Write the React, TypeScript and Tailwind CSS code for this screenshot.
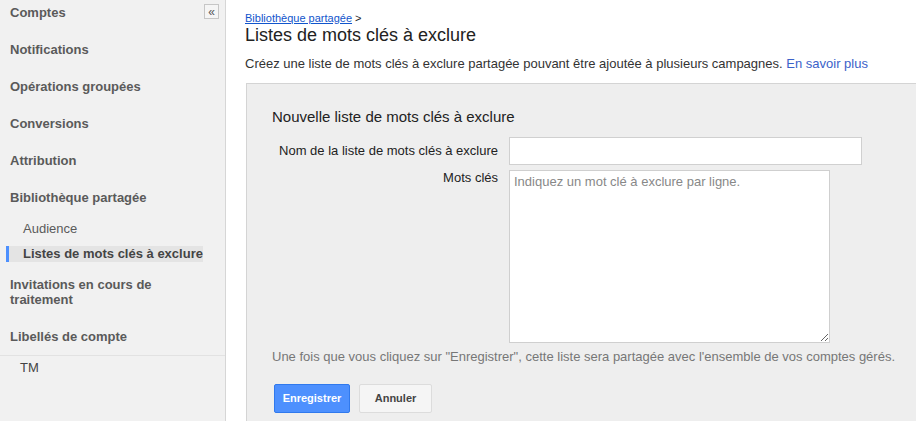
import React from "react";

const NAV_TOP = [
  "Comptes",
  "Notifications",
  "Opérations groupées",
  "Conversions",
  "Attribution",
  "Bibliothèque partagée",
];

function Sidebar() {
  return (
    <aside className="relative w-[226px] shrink-0 border-r border-[#d6d6d6] bg-[#f1f1f1] text-[13px] text-[#5a5a5a]">
      <button
        type="button"
        className="absolute left-[204px] top-[4px] flex h-[15px] w-[15px] items-center justify-center border border-[#c6c6c6] bg-[#f5f5f5] text-[12px] leading-none text-[#555]"
      >
        «
      </button>
      <div className="pt-[5px]">
        {NAV_TOP.map((label) => (
          <div key={label} className="flex h-[37px] items-start pl-[10px] font-bold">
            <span className="leading-[16px]">{label}</span>
          </div>
        ))}
      </div>
      <div className="-mt-[6px] pl-[23px] leading-[16px]">
        <div className="h-[25px]">Audience</div>
      </div>
      <div className="relative ml-[6px] h-[16px] w-[197px] bg-[#e4e4e4] pl-[17px] font-bold leading-[16px] text-[#444]">
        <span className="absolute left-0 top-0 h-full w-[3px] bg-[#4d90fe]" />
        Listes de mots clés à exclure
      </div>
      <div className="mt-[15px] pl-[10px] font-bold leading-[15px]">
        Invitations en cours de
        <br />
        traitement
      </div>
      <div className="mt-[22px] h-[26px] pl-[10px] font-bold leading-[16px]">Libellés de compte</div>
      <div className="border-t border-[#e2e2e2] pl-[20px] pt-[4px] leading-[16px] text-[#444]">TM</div>
    </aside>
  );
}

export default function App() {
  return (
    <div
      className="flex h-[421px] w-[916px] overflow-hidden bg-white"
      style={{ fontFamily: '"Liberation Sans", Arial, sans-serif' }}
    >
      <Sidebar />
      <main className="flex-1 pl-[19px] pt-[12px]">
        <div className="text-[11px] leading-[12px] text-[#222]">
          <a href="#" className="text-[#15c] underline">
            Bibliothèque partagée
          </a>{" "}
          &gt;
        </div>
        <h1 className="text-[18px] leading-[22px] text-[#222]">Listes de mots clés à exclure</h1>
        <p className="mt-[10px] text-[13px] leading-[16px] text-[#333]">
          Créez une liste de mots clés à exclure partagée pouvant être ajoutée à plusieurs campagnes.{" "}
          <a href="#" className="text-[#3b62c9]">
            En savoir plus
          </a>
        </p>
        <section className="ml-[1px] mt-[11px] h-[400px] border-l border-t border-[#d4d4d4] bg-[#eeeeee] pl-[25px] pt-[24px]">
          <h2 className="text-[15px] leading-[18px] text-[#222]">Nouvelle liste de mots clés à exclure</h2>
          <div className="mt-[11px] flex items-start gap-[11px]">
            <div className="w-[226px] pt-[6px] text-right text-[13px] leading-[16px] text-[#222]">
              Nom de la liste de mots clés à exclure
            </div>
            <input
              type="text"
              className="h-[28px] w-[353px] border border-[#d0d0d0] bg-white px-[4px] text-[13px]"
            />
          </div>
          <div className="mt-[5px] flex items-start gap-[11px]">
            <div className="w-[226px] text-right text-[13px] leading-[16px] text-[#222]">Mots clés</div>
            <textarea
              placeholder="Indiquez un mot clé à exclure par ligne."
              className="h-[173px] w-[321px] resize border border-[#cfcfcf] bg-white px-[4px] py-[3px] text-[13px] leading-[16px] text-[#222] outline-none placeholder:text-[#888]"
            />
          </div>
          <p className="mt-[6px] text-[13px] leading-[16px] text-[#777]">
            Une fois que vous cliquez sur "Enregistrer", cette liste sera partagée avec l'ensemble de vos comptes gérés.
          </p>
          <div className="ml-[2px] mt-[19px] flex gap-[9px]">
            <button
              type="button"
              className="h-[29px] w-[76px] rounded-[2px] border border-[#3079ed] bg-[#4d90fe] text-[11px] font-bold text-white"
            >
              Enregistrer
            </button>
            <button
              type="button"
              className="h-[29px] w-[73px] rounded-[2px] border border-[#dcdcdc] bg-[#f5f5f5] text-[11px] font-bold text-[#444]"
            >
              Annuler
            </button>
          </div>
        </section>
      </main>
    </div>
  );
}
